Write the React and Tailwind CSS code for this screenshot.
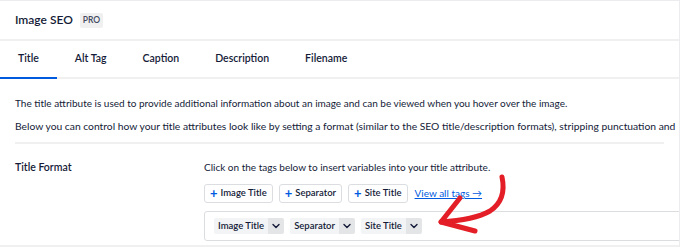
import React from "react";

function Chevron() {
  return (
    <svg width="8" height="6" viewBox="0 0 8 6" fill="none">
      <path d="M1 1.5 L4 4.5 L7 1.5" stroke="#141b38" strokeWidth="1.4" strokeLinecap="round" strokeLinejoin="round" />
    </svg>
  );
}

function AddTag({ label }) {
  return (
    <div className="flex items-center h-[19px] px-[5px] gap-[3px] border border-[#dcdde1] rounded-[3px] bg-white text-[#141b38] font-semibold text-[9.5px] shrink-0">
      <span className="text-[#005ae0] text-[13px] font-bold leading-none">+</span>
      <span>{label}</span>
    </div>
  );
}

function FmtTag({ label }) {
  return (
    <div className="flex items-stretch h-[16px] rounded-[2px] overflow-hidden text-[9.5px] font-semibold text-[#141b38] shrink-0">
      <span className="flex items-center px-[4px] bg-[#f3f4f5]">{label}</span>
      <span className="flex items-center justify-center w-[16px] bg-[#e4e5e7]"><Chevron /></span>
    </div>
  );
}

export default function App() {
  const tabs = ["Title", "Alt Tag", "Caption", "Description", "Filename"];
  return (
    <div
      className="relative w-[680px] h-[247px] overflow-hidden bg-white border-t border-r border-[#ececee] text-[#141b38]"
      style={{ fontFamily: "Lato, 'Liberation Sans', sans-serif" }}
    >
      <div className="h-[40px] flex items-center px-[15px] gap-[7px] border-b-2 border-[#f0f0f1]">
        <span className="text-[12px] font-semibold">Image SEO</span>
        <span className="h-[15px] px-[3px] flex items-center bg-[#f0f0f1] text-[#434960] text-[8.5px] font-semibold rounded-[2px]">PRO</span>
      </div>
      <div className="h-[38px] flex border-b-2 border-[#f0f0f1]">
        {tabs.map((t, i) => (
          <div
            key={t}
            className={
              "flex items-center px-[18px] text-[10.5px] font-semibold " +
              (i === 0 ? "border-b-2 border-[#005ae0] mb-[-2px]" : "")
            }
          >
            {t}
          </div>
        ))}
      </div>
      <div className="px-[15px] text-[10px] whitespace-nowrap">
        <p className="mt-[17px] leading-[14px]">
          The title attribute is used to provide additional information about an image and can be viewed when you hover over the image.
        </p>
        <p className="mt-[9px] leading-[14px] text-[10.3px]">
          Below you can control how your title attributes look like by setting a format (similar to the SEO title/description formats), stripping punctuation and
        </p>
        <div className="mt-[9px] border-t-2 border-[#f0f0f1]" />
        <div className="flex mt-[16px]">
          <div className="w-[189px] shrink-0 text-[10.5px] font-semibold leading-[14px]">Title Format</div>
          <div className="flex-1 min-w-0">
            <div className="leading-[14px]">Click on the tags below to insert variables into your title attribute.</div>
            <div className="flex items-center gap-[6px] mt-[10px]">
              <AddTag label="Image Title" />
              <AddTag label="Separator" />
              <AddTag label="Site Title" />
              <a className="ml-[1px] text-[#005ae0] underline text-[10px]">View all tags →</a>
            </div>
            <div className="mt-[8px] h-[30px] w-[500px] border border-[#dcdde1] rounded-[3px] flex items-center gap-[6px] px-[9px]">
              <FmtTag label="Image Title" />
              <FmtTag label="Separator" />
              <FmtTag label="Site Title" />
            </div>
          </div>
        </div>
      </div>
      <div className="absolute left-0 right-0 bottom-0 h-[2px] bg-[#f0f0f1]" />
      <svg className="absolute left-0 top-0 pointer-events-none" width="680" height="247" viewBox="0 0 680 247" fill="none">
        <path d="M502 176 C505 190 502 202 490 210 C476 218 458 220 441 221" stroke="#e41e26" strokeWidth="5" strokeLinecap="round" />
        <path d="M460 197 L441 221 L475 230" stroke="#e41e26" strokeWidth="5" strokeLinecap="round" strokeLinejoin="round" />
      </svg>
    </div>
  );
}
